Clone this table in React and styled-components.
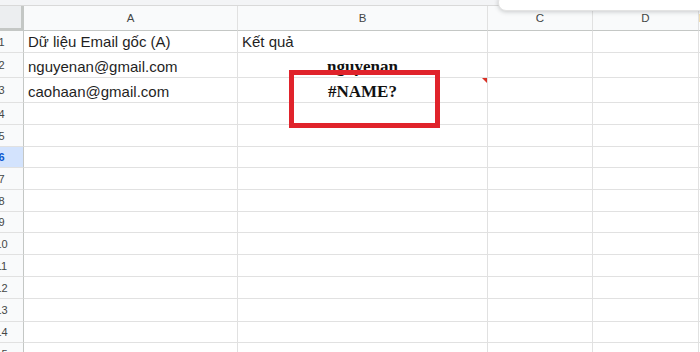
import React from 'react';
import styled, { createGlobalStyle, css } from 'styled-components';

const GlobalStyle = createGlobalStyle`
  *, *::before, *::after { box-sizing: border-box; }
  html, body { margin: 0; padding: 0; background: #fff; overflow: hidden; }
  body { font-family: "Liberation Sans", Arial, sans-serif; }
`;

const Page = styled.div`
  position: relative;
  width: 700px;
  height: 352px;
  overflow: hidden;
  background: #fff;
`;

const TopStrip = styled.div`
  height: 6px;
  background: #f3f4f6;
  border-bottom: 1px solid #d9d9d9;
`;

const Sheet = styled.div`
  display: flex;
  flex-direction: column;
  margin-left: -20px;
`;

const Row = styled.div`
  display: flex;
  flex: none;
  height: ${p => p.h}px;
`;

const Corner = styled.div`
  flex: none;
  width: 44px;
  background: #eceef0;
  border-right: 3px solid #c4c7c5;
  border-bottom: 3px solid #c4c7c5;
`;

const ColHeader = styled.div`
  flex: ${p => (p.w ? 'none' : '1')};
  width: ${p => (p.w ? `${p.w}px` : 'auto')};
  display: flex;
  align-items: center;
  justify-content: center;
  background: #f9fafb;
  border-right: 1px solid #e1e1e1;
  border-bottom: 1px solid #c4c7c5;
  font-size: 11.5px;
  color: #444746;
`;

const RowHeader = styled.div`
  flex: none;
  width: 44px;
  display: flex;
  align-items: center;
  justify-content: center;
  background: #f9fafb;
  border-right: 1px solid #c4c7c5;
  border-bottom: 1px solid #e1e1e1;
  font-size: 11px;
  color: #444746;
  ${p => p.selected && css`
    background: #d3e3fd;
    color: #0b57d0;
    font-weight: bold;
  `}
`;

const Cell = styled.div`
  position: relative;
  flex: ${p => (p.w ? 'none' : '1')};
  width: ${p => (p.w ? `${p.w}px` : 'auto')};
  display: flex;
  align-items: flex-end;
  justify-content: ${p => (p.center ? 'center' : 'flex-start')};
  padding: 0 4px 2px 4px;
  border-right: 1px solid #e1e1e1;
  border-bottom: 1px solid #e1e1e1;
  font-size: 15px;
  line-height: 17px;
  color: #1f1f1f;
  white-space: nowrap;
  ${p => p.result && css`
    font-family: "Liberation Serif", "Times New Roman", serif;
    font-weight: bold;
    font-size: 17px;
    color: #111;
  `}
`;

const ErrorMark = styled.span`
  position: absolute;
  top: 0;
  right: 0;
  width: 0;
  height: 0;
  border-top: 5px solid #d93025;
  border-left: 5px solid transparent;
`;

const Highlight = styled.div`
  position: absolute;
  left: 289px;
  top: 70px;
  width: 151px;
  height: 58px;
  border: 5px solid #e0232b;
`;

const Popup = styled.div`
  position: absolute;
  left: 498px;
  top: -6px;
  width: 220px;
  height: 17px;
  background: #fff;
  border: 1px solid #e3e3e3;
  border-radius: 8px;
  box-shadow: 0 1px 4px rgba(60, 64, 67, 0.25);
`;

const columns = [
  { key: 'A', w: 214 },
  { key: 'B', w: 250 },
  { key: 'C', w: 105 },
  { key: 'D', w: 106 },
  { key: 'E' },
];

const heights = [22, 25, 25, 22, 22, 21, 22, 22, 21, 22, 22, 22, 23, 21, 22];

const data = {
  1: { A: 'Dữ liệu Email gốc (A)', B: 'Kết quả' },
  2: { A: 'nguyenan@gmail.com', B: 'nguyenan', resultB: true },
  3: { A: 'caohaan@gmail.com', B: '#NAME?', resultB: true, error: true },
};

const App = () => (
  <Page>
    <GlobalStyle />
    <TopStrip />
    <Sheet>
      <Row h={25}>
        <Corner />
        {columns.map(c => (
          <ColHeader key={c.key} w={c.w}>{c.key}</ColHeader>
        ))}
      </Row>
      {heights.map((h, i) => {
        const n = i + 1;
        const r = data[n] || {};
        return (
          <Row key={n} h={h}>
            <RowHeader selected={n === 6}>{n}</RowHeader>
            {columns.map(c => {
              const isB = c.key === 'B';
              const result = isB && r.resultB;
              return (
                <Cell key={c.key} w={c.w} result={result} center={result}>
                  {r[c.key]}
                  {isB && r.error && <ErrorMark />}
                </Cell>
              );
            })}
          </Row>
        );
      })}
    </Sheet>
    <Highlight />
    <Popup />
  </Page>
);

export default App;
